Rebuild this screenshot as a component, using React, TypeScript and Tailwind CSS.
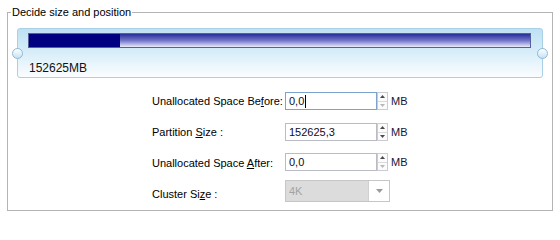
import React from "react";

const font = { fontFamily: '"Liberation Sans", Arial, sans-serif' };

function Spinner({ downOff }: { downOff?: boolean }) {
  return (
    <div className="flex h-[18px] w-[11px] flex-col border border-[#c9ccd2] bg-[#fbfbfb]">
      <div className="flex flex-1 items-center justify-center border-b border-[#d8dade]">
        <svg width="5" height="3" viewBox="0 0 5 3">
          <path d="M2.5 0 L5 3 L0 3 Z" fill="#4a4a4a" />
        </svg>
      </div>
      <div className="flex flex-1 items-center justify-center">
        <svg width="5" height="3" viewBox="0 0 5 3">
          <path d="M0 0 L5 0 L2.5 3 Z" fill={downOff ? "#b8b8b8" : "#4a4a4a"} />
        </svg>
      </div>
    </div>
  );
}

function NumRow({
  label,
  value,
  focused,
  downOff,
  labelClass,
}: {
  label: React.ReactNode;
  value: string;
  focused?: boolean;
  downOff?: boolean;
  labelClass?: string;
}) {
  return (
    <div className="flex h-[18px] items-center">
      <div className={"w-[133px] text-[11px] text-black " + (labelClass ?? "")}>{label}</div>
      <div
        className={
          "flex h-[18px] w-[92px] items-center border bg-white pl-[3px] text-[11px] text-[#0d0d2a] " +
          (focused ? "border-[#7da2ce]" : "border-[#b9bcc2]")
        }
      >
        {value}
        {focused && <span className="ml-[1px] h-[13px] w-px bg-black" />}
      </div>
      <Spinner downOff={downOff} />
      <span className="ml-[3px] text-[11px] text-[#14143a]">MB</span>
    </div>
  );
}

export default function App() {
  return (
    <div className="h-[218px] w-[560px] bg-white" style={font}>
      <fieldset className="ml-[7px] mt-[5px] h-[206px] w-[546px] border border-[#b4b4b4] p-0">
        <legend className="ml-[3px] px-[1px] text-[11px] leading-[14px] text-black">
          Decide size and position
        </legend>

        {/* slider panel */}
        <div className="relative ml-[9px] mt-[9px] h-[50px] w-[526px] rounded-[3px] border border-[#a9d0e4] bg-gradient-to-b from-[#bde1f4] via-[#d9eef9] to-[#fbfdff]">
          <div className="ml-[10px] mt-[4px] flex h-[15px] w-[503px] border border-[#56609f] bg-gradient-to-b from-[#2b2c98] via-[#7274c8] to-[#ecebf8]">
            <div className="h-full w-[91px] bg-[#000080]" />
          </div>
          <div className="ml-[11px] mt-[13px] text-[12px] leading-[14px] text-[#111]">152625MB</div>
          <div className="absolute left-[-6px] top-[19px] h-[11px] w-[11px] rounded-full border border-[#8fb9d6] bg-gradient-to-b from-white to-[#c6e2f3]" />
          <div className="absolute right-[-6px] top-[19px] h-[11px] w-[11px] rounded-full border border-[#8fb9d6] bg-gradient-to-b from-white to-[#c6e2f3]" />
        </div>

        {/* size fields */}
        <div className="ml-[144px] mt-[14px] flex flex-col">
          <NumRow
            label={
              <>
                Unallocated Space Be<u>f</u>ore:
              </>
            }
            value="0,0"
            focused
            downOff
          />
          <div className="mt-[13px]">
            <NumRow
              label={
                <>
                  Partition <u>S</u>ize :
                </>
              }
              value="152625,3"
            />
          </div>
          <div className="mt-[12px]">
            <NumRow
              label={
                <>
                  Unallocated Space <u>A</u>fter:
                </>
              }
              value="0,0"
              downOff
              labelClass="pt-[3px]"
            />
          </div>
          <div className="mt-[9px] flex h-[22px] items-center">
            <div className="w-[133px] pt-[6px] text-[11px] text-black">
              Cluster Si<u>z</u>e :
            </div>
            <div className="flex h-[22px] w-[105px] border border-[#c6c6c6]">
              <div className="flex flex-1 items-center bg-[#dcdcdc] pl-[3px] text-[11px] text-[#a3a3a3]">4K</div>
              <div className="flex w-[21px] items-center justify-center border-l border-[#d0d0d0] bg-white">
                <svg width="7" height="4" viewBox="0 0 7 4">
                  <path d="M0 0 L7 0 L3.5 4 Z" fill="#9a9a9a" />
                </svg>
              </div>
            </div>
          </div>
        </div>
      </fieldset>
    </div>
  );
}
